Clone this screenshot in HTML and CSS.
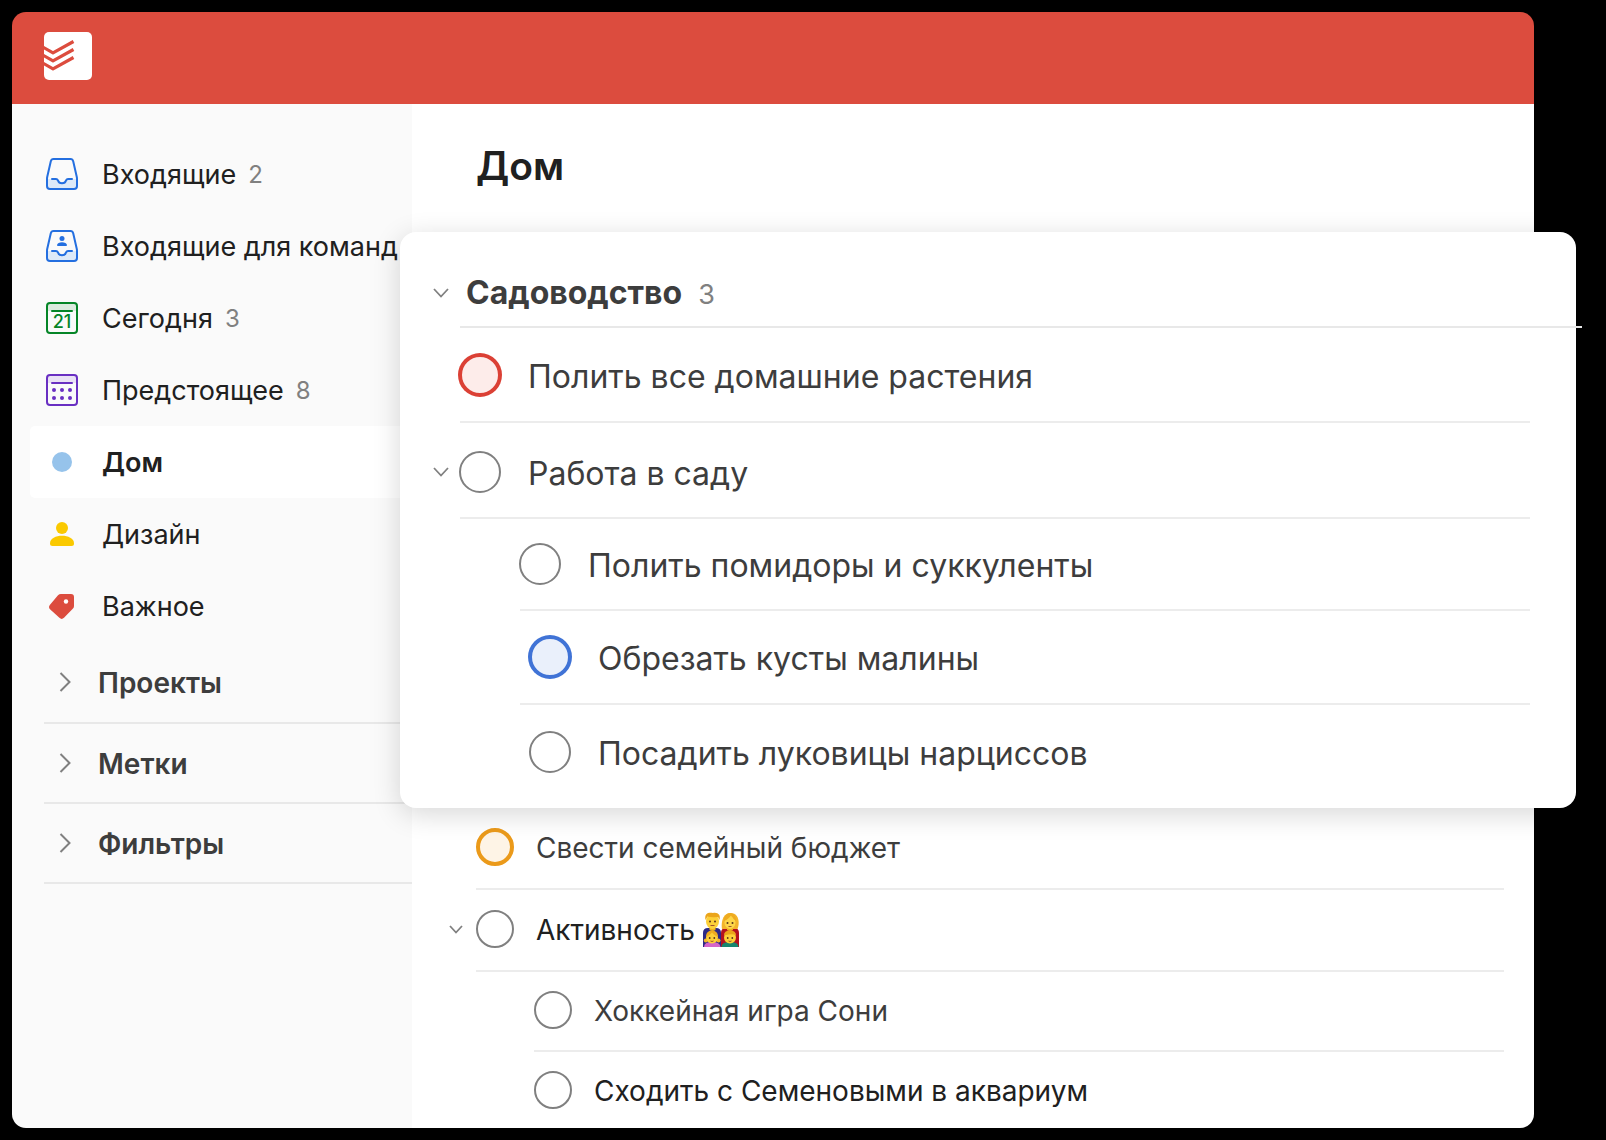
FILE: index.html
```html
<!DOCTYPE html>
<html lang="ru">
<head>
<meta charset="utf-8">
<meta name="viewport" content="width=device-width, initial-scale=1">
<title>Дом</title>
<link rel="stylesheet" href="styles.css">
</head>
<body>
<div class="app">
  <header class="topbar">
    <a class="logo" href="#" aria-label="Todoist">
      <svg width="48" height="48" viewBox="0 0 48 48" fill="none" stroke="#dc4c3e" stroke-width="3.2" stroke-linejoin="round">
        <path d="M-1 15.200 L9 20.800 L29.500 9.500 M-1 23.200 L9 28.800 L29.500 17.500 M-1 31.200 L9 36.800 L29.500 25.500"/>
      </svg>
    </a>
  </header>

  <div class="body">
    <aside class="sidebar">
      <nav class="nav">
        <a class="nav-link" href="#">
          <svg class="icon" viewBox="0 0 32 32" fill="none" stroke="#246fe0" stroke-width="2" stroke-linecap="round" stroke-linejoin="round">
            <path d="M1.500 21H10C11 21 11.500 21.500 12 22.500C13 26 19 26 20 22.500C20.500 21.500 21 21 22 21H30.500V28Q30.500 31 28 31H4Q1 31 1 28Z" fill="#deeaf8" stroke="none"/>
            <path d="M7.500 1H24.500Q26.600 1 27.200 3.200L30.800 19Q31 20 31 21V28Q31 31 28 31H4Q1 31 1 28V21Q1 20 1.200 19L4.800 3.200Q5.400 1 7.500 1Z"/>
            <path d="M6 21H10C11 21 11.500 21.500 12 22.500C13 26.300 19 26.300 20 22.500C20.500 21.500 21 21 22 21H26"/>
          </svg>
          <span>Входящие</span><span class="count">2</span>
        </a>
        <a class="nav-link" href="#">
          <svg class="icon" viewBox="0 0 32 32" fill="none" stroke="#246fe0" stroke-width="2" stroke-linecap="round" stroke-linejoin="round">
            <path d="M1.500 21H10C11 21 11.500 21.500 12 22.500C13 26 19 26 20 22.500C20.500 21.500 21 21 22 21H30.500V28Q30.500 31 28 31H4Q1 31 1 28Z" fill="#deeaf8" stroke="none"/>
            <path d="M7.500 1H24.500Q26.600 1 27.200 3.200L30.800 19Q31 20 31 21V28Q31 31 28 31H4Q1 31 1 28V21Q1 20 1.200 19L4.800 3.200Q5.400 1 7.500 1Z"/>
            <path d="M6 21H10C11 21 11.500 21.500 12 22.500C13 26.300 19 26.300 20 22.500C20.500 21.500 21 21 22 21H26"/>
            <circle cx="16" cy="8.500" r="2.500" fill="#246fe0" stroke="none"/>
            <path d="M11 15.200C11 11.200 21 11.200 21 15.200Q21 16 20 16H12Q11 16 11 15.200Z" fill="#246fe0" stroke="none"/>
          </svg>
          <span>Входящие для команд</span>
        </a>
        <a class="nav-link" href="#">
          <svg class="icon" viewBox="0 0 32 32" fill="none" stroke="#058527" stroke-width="2" stroke-linecap="round">
            <path d="M2 2H30V9H2Z" fill="#dcebdf" stroke="none"/>
            <rect x="1" y="1" width="30" height="30" rx="3"/>
            <path d="M6 9H26"/>
            <text class="icon-day" x="16" y="26" text-anchor="middle">21</text>
          </svg>
          <span>Сегодня</span><span class="count">3</span>
        </a>
        <a class="nav-link" href="#">
          <svg class="icon" viewBox="0 0 32 32" fill="none" stroke="#692fc2" stroke-width="2" stroke-linecap="round">
            <path d="M2 2H30V9H2Z" fill="#e9e1f5" stroke="none"/>
            <rect x="1" y="1" width="30" height="30" rx="3"/>
            <path d="M6 9H26"/>
            <g fill="#692fc2" stroke="none">
              <circle cx="8" cy="16" r="2"/><circle cx="16" cy="16" r="2"/><circle cx="24" cy="16" r="2"/>
              <circle cx="8" cy="24" r="2"/><circle cx="16" cy="24" r="2"/><circle cx="24" cy="24" r="2"/>
            </g>
          </svg>
          <span>Предстоящее</span><span class="count">8</span>
        </a>
        <a class="nav-link is-active" href="#" aria-current="page">
          <svg class="icon" viewBox="0 0 32 32"><circle cx="16" cy="16" r="10" fill="#96c3eb"/></svg>
          <span>Дом</span>
        </a>
        <a class="nav-link" href="#">
          <svg class="icon" viewBox="0 0 32 32" fill="#fac900">
            <circle cx="16" cy="10" r="6"/>
            <path d="M4 25.500C4 15.300 28 15.300 28 25.500Q28 28 25.500 28H6.500Q4 28 4 25.500Z"/>
          </svg>
          <span>Дизайн</span>
        </a>
        <a class="nav-link" href="#">
          <svg class="icon" viewBox="0 0 32 32">
            <path d="M15 4H25Q28 4 28 7V16Q28 17.500 27 18.600L18 27.800Q15.700 30 13.400 27.800L4 19.200Q2 17 4 14.700L12 5.300Q13.200 4 15 4Z" fill="#dc4c3e"/>
            <circle cx="20" cy="11.500" r="2.200" fill="#fff"/>
          </svg>
          <span>Важное</span>
        </a>
      </nav>
      <ul class="groups">
        <li><button class="group" type="button" aria-expanded="false"><svg width="12" height="20" viewBox="0 0 12 20" fill="none" stroke="#808080" stroke-width="2"><path d="M1.500 1L10.500 10L1.500 19"/></svg><span>Проекты</span></button></li>
        <li><button class="group" type="button" aria-expanded="false"><svg width="12" height="20" viewBox="0 0 12 20" fill="none" stroke="#808080" stroke-width="2"><path d="M1.500 1L10.500 10L1.500 19"/></svg><span>Метки</span></button></li>
        <li><button class="group" type="button" aria-expanded="false"><svg width="12" height="20" viewBox="0 0 12 20" fill="none" stroke="#808080" stroke-width="2"><path d="M1.500 1L10.500 10L1.500 19"/></svg><span>Фильтры</span></button></li>
      </ul>
    </aside>

    <main class="content">
      <h1>Дом</h1>

      <section class="card">
        <div class="card-head">
          <button class="toggle" type="button" aria-label="Свернуть раздел"><svg width="16" height="10" viewBox="0 0 16 10" fill="none" stroke="#808080" stroke-width="1.800"><path d="M1 1L8 8.500L15 1"/></svg></button>
          <h2>Садоводство</h2><span class="card-count">3</span>
        </div>
        <ul class="tasks">
          <li class="task"><input class="check red" type="checkbox" id="t1"><label for="t1">Полить все домашние растения</label></li>
          <li class="task parent"><button class="toggle" type="button" aria-label="Свернуть подзадачи"><svg width="16" height="10" viewBox="0 0 16 10" fill="none" stroke="#808080" stroke-width="1.800"><path d="M1 1L8 8.500L15 1"/></svg></button><input class="check" type="checkbox" id="t2"><label for="t2">Работа в саду</label></li>
          <li class="task sub"><input class="check" type="checkbox" id="t3"><label for="t3">Полить помидоры и суккуленты</label></li>
          <li class="task sub inset"><input class="check blue" type="checkbox" id="t4"><label for="t4">Обрезать кусты малины</label></li>
          <li class="task sub inset"><input class="check" type="checkbox" id="t5"><label for="t5">Посадить луковицы нарциссов</label></li>
        </ul>
      </section>

      <ul class="tasks compact">
        <li class="task"><input class="check orange" type="checkbox" id="t6"><label for="t6">Свести семейный бюджет</label></li>
        <li class="task strong"><button class="toggle" type="button" aria-label="Свернуть подзадачи"><svg width="14" height="9" viewBox="0 0 14 9" fill="none" stroke="#808080" stroke-width="1.800"><path d="M1 1L7 7.500L13 1"/></svg></button><input class="check" type="checkbox" id="t7"><label for="t7">Активность
          <svg class="family" viewBox="0 0 36 36" role="img" aria-label="Семья">
            <path d="M0 35V21Q0 16 5 16H13Q18 16 18 21V35Z" fill="#2d2a86"/>
            <path d="M18 35V21Q18 16 23 16H31Q36 16 36 21V35Z" fill="#b5121f"/>
            <path d="M19 17C18 12 19 1 27.500 1S37 11 34.500 17Z" fill="#f3b42a"/>
            <path d="M6.500 14H12.500V18Q9.500 20 6.500 18ZM24 14H30V18Q27 20 24 18Z" fill="#eeb01e"/>
            <ellipse cx="9.500" cy="9.500" rx="6.500" ry="7.500" fill="#fdd038"/>
            <ellipse cx="27" cy="10.500" rx="5.500" ry="6.500" fill="#fdd648"/>
            <path d="M2.500 8C1 1 6 0 10 1C15 0 18 3 16.500 8L15 5Q8 5.500 4.500 4.500Z" fill="#eba51a"/>
            <path d="M21 9Q26 7 28 3Q30 7 33 9Q33 2 28 1Q21 1 21 9Z" fill="#eeab20"/>
            <path d="M1 35Q1 30 9 30T17.500 35Z" fill="#d565c8"/>
            <path d="M18.500 35Q18.500 30 27 30T35.500 35Z" fill="#17866f"/>
            <circle cx="2.800" cy="28.500" r="2" fill="#f3b42a"/><circle cx="15.500" cy="28.500" r="2" fill="#f3b42a"/>
            <circle cx="9" cy="25.500" r="6" fill="#fdd038"/>
            <circle cx="27" cy="25.500" r="6" fill="#fdd038"/>
            <path d="M3 25Q3 18.500 9 18.500T15 25Q11 23.500 9 20.500Q7 23.500 3 25Z" fill="#eeab20"/>
            <path d="M21 23.500Q21 18.500 27 18.500T33 23.500Q30 20.800 21 23.500Z" fill="#eba51a"/>
            <g fill="#59351b">
              <circle cx="7" cy="9.500" r="1"/><circle cx="12" cy="9.500" r="1"/>
              <circle cx="24.500" cy="11" r="1"/><circle cx="29.500" cy="11" r="1"/>
              <circle cx="6.700" cy="26" r=".9"/><circle cx="11.300" cy="26" r=".9"/>
              <circle cx="24.700" cy="26" r=".9"/><circle cx="29.300" cy="26" r=".9"/>
            </g>
            <g fill="none" stroke="#a0522d" stroke-width="1">
              <path d="M7.500 13.500H11.500M25.500 14.500H28.500M7.500 29Q9 30 10.500 29M25.500 29Q27 30 28.500 29"/>
            </g>
          </svg></label></li>
        <li class="task sub"><input class="check" type="checkbox" id="t8"><label for="t8">Хоккейная игра Сони</label></li>
        <li class="task sub strong"><input class="check" type="checkbox" id="t9"><label for="t9">Сходить с Семеновыми в аквариум</label></li>
      </ul>
    </main>
  </div>
</div>
</body>
</html>
```
FILE: styles.css
```css
* {
  box-sizing: border-box;
}

body {
  margin: 0;
  padding: 12px 72px 12px 12px;
  background: #000;
  color: #202020;
  font-family: Inter, "Noto Sans", sans-serif;
  font-size: 28px;
  line-height: 36px;
}

ul {
  margin: 0;
  padding: 0;
  list-style: none;
}

button {
  padding: 0;
  border: 0;
  background: none;
  color: inherit;
  font: inherit;
  cursor: pointer;
}

svg {
  display: block;
  flex: none;
}

.app {
  display: flex;
  flex-direction: column;
  min-height: calc(100vh - 24px);
}

.topbar {
  display: flex;
  align-items: center;
  height: 92px;
  padding: 0 32px 4px;
  border-radius: 14px 14px 0 0;
  background: #dc4c3e;
}

.logo {
  overflow: hidden;
  border-radius: 5px;
  background: #fff;
}

.body {
  display: flex;
  flex: 1;
}

/* Sidebar */

.sidebar {
  flex: none;
  width: 400px;
  padding: 34px 0 0 18px;
  border-radius: 0 0 0 14px;
  background: #fafafa;
}

.nav-link {
  display: flex;
  align-items: center;
  height: 72px;
  padding-left: 16px;
  border-radius: 5px 0 0 5px;
  color: #202020;
  font-size: 27px;
  text-decoration: none;
  white-space: nowrap;
}

.nav-link.is-active {
  background: #fff;
  font-weight: 600;
}

.nav-link span,
.group span {
  padding-top: 2px;
}

.icon {
  width: 32px;
  height: 32px;
  margin-right: 24px;
}

.icon-day {
  fill: #058527;
  stroke: none;
  font-size: 18px;
  font-weight: 500;
}

.count {
  margin-left: 12px;
  color: #808080;
  font-size: 24px;
}

.groups {
  margin-left: 14px;
}

.groups li {
  border-bottom: 2px solid #e8e8e8;
}

.group {
  display: flex;
  align-items: center;
  gap: 27px;
  width: 100%;
  height: 78px;
  padding-left: 15px;
  color: #3d3d3d;
  font-weight: 600;
}

.groups li:first-child .group {
  height: 80px;
}

/* Project */

.content {
  flex: 1;
  min-width: 0;
  padding: 38px 30px 0 64px;
  border-radius: 0 0 14px 0;
  background: #fff;
}

h1,
h2 {
  margin: 0;
  font-weight: 600;
}

h1 {
  font-size: 39px;
  line-height: 48px;
}

.card {
  position: relative;
  margin: 42px -72px 0 -76px;
  padding: 0 46px 9px 60px;
  border-radius: 16px;
  background: #fff;
  box-shadow: 0 6px 28px rgba(0, 0, 0, 0.16);
  color: #3d3d3d;
  font-size: 32px;
}

.card-head {
  display: flex;
  align-items: center;
  height: 96px;
  margin-right: -52px;
  padding-top: 28px;
  border-bottom: 2px solid #e8e8e8;
}

h2 {
  padding-left: 6px;
  font-size: 32px;
  font-weight: 700;
}

.card-count {
  margin-left: 16px;
  padding-top: 4px;
  color: #808080;
  font-size: 27px;
}

.toggle {
  display: flex;
  justify-content: center;
  flex: none;
  width: 38px;
  margin-left: -38px;
}

.task {
  display: flex;
  align-items: center;
  height: 95px;
  border-bottom: 2px solid #ececec;
}

.task.parent {
  height: 96px;
  padding-top: 4px;
}

.task.sub {
  height: 92px;
  margin-left: 60px;
}

.task.inset {
  height: 94px;
  padding-left: 10px;
}

.task:last-child {
  border-bottom: 0;
}

.task label {
  padding: 4px 0 0 27px;
}

.check {
  appearance: none;
  flex: none;
  width: 42px;
  height: 42px;
  margin: 0 0 0 -1px;
  border: 2px solid #808080;
  border-radius: 50%;
  background: #fff;
}

.check.red {
  border: 3px solid #db4035;
  background: #fdecea;
  box-shadow: 0 0 0 1px #db4035;
}

.check.blue {
  border: 3px solid #4073d6;
  background: #eaf0fb;
  box-shadow: 0 0 0 1px #4073d6;
}

.check.orange {
  border: 4px solid #eb9a1a;
  background: #fef4e6;
}

/* Project list under the card */

.compact {
  color: #3d3d3d;
}

.compact .task {
  height: 82px;
  padding-bottom: 2px;
}

.compact .task.sub {
  height: 80px;
  margin-left: 58px;
}

.compact .task:last-child {
  height: 76px;
  padding-bottom: 0;
}

.compact .task.strong {
  color: #202020;
}

.compact .check {
  width: 38px;
  height: 38px;
  margin: 0;
}

.compact .toggle {
  width: 40px;
  margin-left: -40px;
}

.compact label {
  display: flex;
  align-items: center;
  gap: 8px;
  padding: 2px 0 0 22px;
}

.family {
  width: 36px;
  height: 36px;
}
```
